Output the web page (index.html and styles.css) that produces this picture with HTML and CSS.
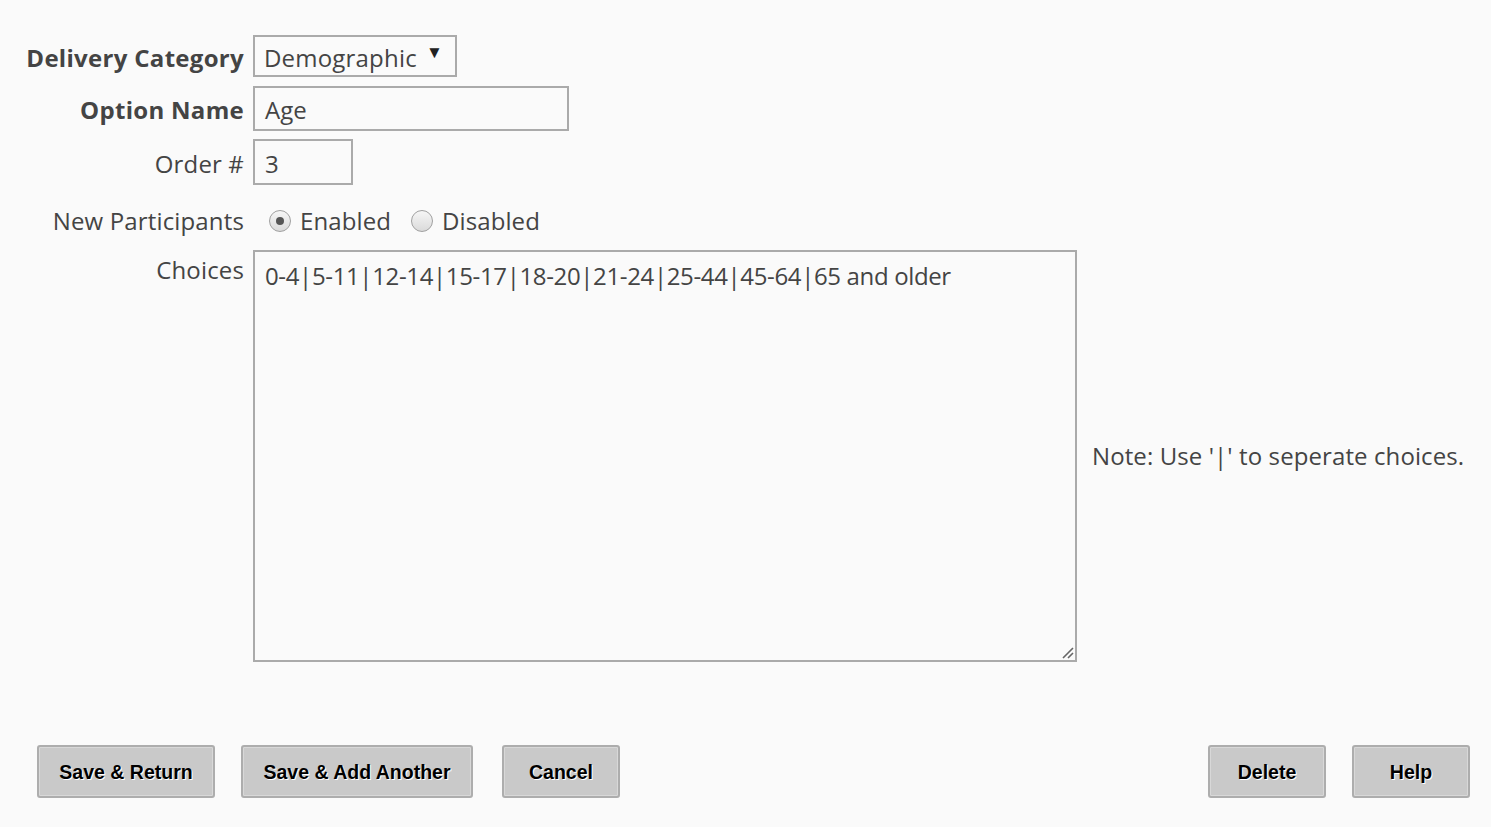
FILE: index.html
```html
<!DOCTYPE html>
<html>
<head>
<meta charset="utf-8">
<link rel="stylesheet" href="styles.css">
</head>
<body>
<div class="page">
  <div class="form">
    <div class="row r1">
      <label class="lbl bold">Delivery Category</label>
      <div class="select"><span>Demographic</span><span class="arrow">▼</span></div>
    </div>
    <div class="row r2">
      <label class="lbl bold">Option Name</label>
      <div class="input name">Age</div>
    </div>
    <div class="row r3">
      <label class="lbl">Order #</label>
      <div class="input order">3</div>
    </div>
    <div class="row r4">
      <label class="lbl">New Participants</label>
      <div class="radios">
        <span class="radio on"></span><span class="rtext">Enabled</span>
        <span class="radio"></span><span class="rtext">Disabled</span>
      </div>
    </div>
    <div class="row r5">
      <label class="lbl top">Choices</label>
      <div class="textarea">0-4|5-11|12-14|15-17|18-20|21-24|25-44|45-64|65 and older
        <svg class="grip" width="14" height="14" viewBox="0 0 14 14"><path d="M3 13 L13 3 M8 13 L13 8" stroke="#666" stroke-width="1.6" fill="none"/></svg>
      </div>
      <div class="note">Note: Use '|' to seperate choices.</div>
    </div>
  </div>
  <div class="buttons">
    <div class="group">
      <button class="btn b1">Save &amp; Return</button>
      <button class="btn b2">Save &amp; Add Another</button>
      <button class="btn b3">Cancel</button>
    </div>
    <div class="group">
      <button class="btn b4">Delete</button>
      <button class="btn b5">Help</button>
    </div>
  </div>
</div>
</body>
</html>
```
FILE: styles.css
```css
html, body {
  margin: 0;
  padding: 0;
  background: #fafafa;
}
.page {
  width: 1491px;
  height: 827px;
  font-family: "Open Sans", "Noto Sans", sans-serif;
  font-size: 24px;
  line-height: 32px;
  color: #444;
  display: flex;
  flex-direction: column;
}
.form {
  padding-top: 35px;
  display: flex;
  flex-direction: column;
}
.row {
  display: flex;
  align-items: center;
}
.lbl {
  width: 253px;
  text-align: right;
  padding-right: 9px;
  box-sizing: border-box;
  white-space: nowrap;
  letter-spacing: 0.15px;
}
.r1 .lbl, .r2 .lbl, .r3 .lbl { padding-top: 3px; }
.bold { font-weight: 700; letter-spacing: 0.3px; }
.select, .input, .textarea {
  box-sizing: border-box;
  border: 2px solid #aaa;
  background: #fafafa;
  padding: 3px 10px 0;
  display: flex;
  align-items: center;
}
.select {
  width: 204px;
  height: 42px;
  justify-content: space-between;
  padding: 3px 12px 0 9px;
  letter-spacing: 0.2px;
}
.arrow {
  font-size: 17px;
  color: #222;
  margin-top: -12px;
}
.r2 { margin-top: 9px; }
.input.name { width: 316px; height: 45px; }
.r3 { margin-top: 8px; }
.input.order { width: 100px; height: 46px; }
.r4 { margin-top: 12px; height: 48px; }
.radios {
  display: flex;
  align-items: center;
  padding-left: 16px;
  letter-spacing: 0.1px;
}
.radio {
  width: 22px;
  height: 22px;
  border: 1px solid #a0a0a0;
  border-radius: 50%;
  background: linear-gradient(#f6f6f6, #dadada);
  box-sizing: border-box;
  position: relative;
  margin-right: 9px;
}
.radio.on::after {
  content: "";
  position: absolute;
  left: 6px;
  top: 6px;
  width: 8px;
  height: 8px;
  border-radius: 50%;
  background: #555;
}
.rtext { margin-right: 20px; }
.r5 { margin-top: 5px; align-items: stretch; }
.lbl.top { padding-top: 4px; }
.textarea {
  width: 824px;
  height: 412px;
  align-items: flex-start;
  padding: 8px 10px 7px;
  position: relative;
  letter-spacing: -0.36px;
}
.grip {
  position: absolute;
  right: 1px;
  bottom: 1px;
}
.note {
  align-self: center;
  margin-left: 15px;
  white-space: nowrap;
  letter-spacing: 0.1px;
}
.buttons {
  margin-top: 83px;
  display: flex;
  justify-content: space-between;
  padding: 0 21px 0 37px;
}
.group {
  display: flex;
}
.btn {
  height: 53px;
  box-sizing: border-box;
  border: 2px solid #adadad;
  border-radius: 3px;
  background: #c9c9c9;
  box-shadow: inset 0 0 0 1px #d8d8d8;
  font-family: "Liberation Sans", Arial, sans-serif;
  font-weight: 700;
  font-size: 19.5px;
  color: #000;
  text-shadow: 1px 1px 0 #fff;
  padding: 1px 0 0;
}
.b1 { width: 178px; }
.b2 { width: 232px; margin-left: 26px; }
.b3 { width: 118px; margin-left: 29px; }
.b4 { width: 118px; }
.b5 { width: 118px; margin-left: 26px; }
```
